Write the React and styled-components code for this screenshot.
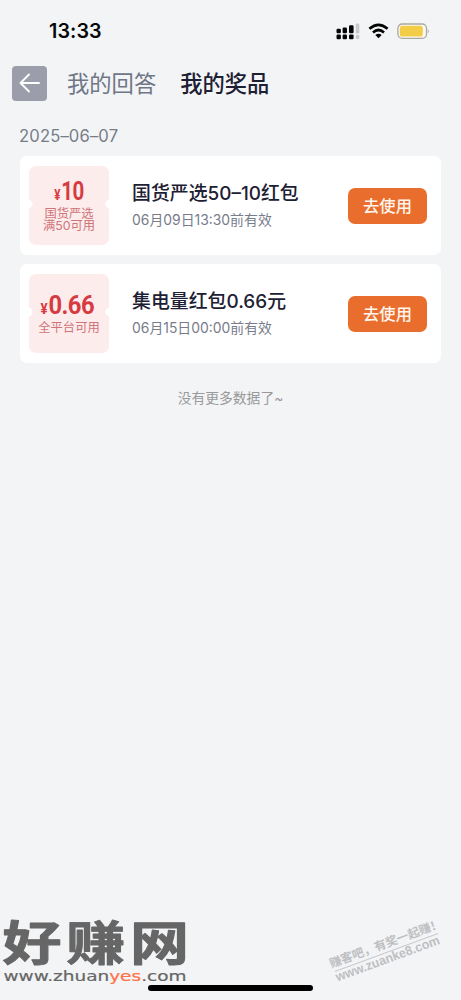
import React from "react";
import styled, { createGlobalStyle } from "styled-components";

const Global = createGlobalStyle`
  * { box-sizing: border-box; }
  body { margin: 0; background: #f3f4f6; }
`;

const Screen = styled.main`
  position: relative;
  width: 461px;
  height: 1000px;
  overflow: hidden;
  background: #f3f4f6;
  font-family: Inter, "Noto Sans CJK SC", sans-serif;
  color: #1d2033;
`;

const StatusBar = styled.div`
  display: flex;
  align-items: center;
  justify-content: space-between;
  height: 62px;
  padding: 0 31px 0 49px;
`;

const Clock = styled.span`
  font-size: 19.7px;
  font-weight: 600;
  line-height: 24px;
  letter-spacing: 0.1px;
  color: #08080a;
`;

const StatusIcons = styled.svg`
  display: block;
  width: 94px;
  height: 20px;
`;

const Header = styled.header`
  display: flex;
  align-items: center;
  height: 42px;
  padding-left: 12px;
`;

const BackButton = styled.button`
  display: grid;
  place-items: center;
  width: 35px;
  height: 35px;
  margin-right: 20px;
  padding: 0;
  border: 0;
  border-radius: 4px;
  background: #9b9eaa;
`;

const Tab = styled.span`
  margin-right: 24px;
  padding-top: 2px;
  font-size: 22.3px;
  line-height: 32px;
  font-weight: ${(p) => (p.$active ? 500 : 400)};
  color: ${(p) => (p.$active ? "#1d2033" : "#6f7686")};
`;

const DateLabel = styled.div`
  height: 52px;
  padding: 21px 0 0 19px;
  font-size: 16.6px;
  line-height: 22px;
  letter-spacing: 0.15px;
  color: #777c88;
`;

const List = styled.section`
  display: flex;
  flex-direction: column;
  gap: 9px;
  padding: 0 20px;
`;

const Card = styled.article`
  display: flex;
  align-items: center;
  height: 99px;
  padding: 0 14px 0 9px;
  border-radius: 7px;
  background: #fff;
`;

const Coupon = styled.div`
  display: flex;
  flex-direction: column;
  align-items: center;
  justify-content: center;
  width: 80px;
  height: 79px;
  border-radius: 7px;
  background:
    radial-gradient(circle at -1px 38px, #fff 4px, transparent 5px),
    radial-gradient(circle at 81px 38px, #fff 4px, transparent 5px),
    #fdecec;
`;

const Amount = styled.div`
  display: flex;
  align-items: baseline;
  margin-right: ${(p) => p.$shift}px;
  font-family: Roboto, sans-serif;
  font-size: 25px;
  font-weight: 700;
  line-height: 26px;
  letter-spacing: -0.6px;
  transform: scaleX(${(p) => p.$stretch});
  color: #d53b41;
`;

const Yen = styled.span`
  margin-right: 1px;
  font-size: 14px;
  letter-spacing: 0;
`;

const Scope = styled.div`
  font-size: 12.3px;
  line-height: 12.5px;
  text-align: center;
  white-space: pre-line;
  color: #cf7479;
`;

const Info = styled.div`
  flex: 1;
  margin-left: 23px;
  white-space: nowrap;
`;

const Title = styled.div`
  font-size: 18.9px;
  font-weight: 500;
  line-height: 27px;
  color: #1d2033;
`;

const Expiry = styled.div`
  margin-top: 2px;
  font-size: 13.9px;
  line-height: 22px;
  color: #777c8b;
`;

const UseButton = styled.button`
  width: 79px;
  height: 36px;
  padding: 0 0 1px;
  border: 0;
  border-radius: 7px;
  background: #e96e2e;
  color: #fff5ec;
  font-family: inherit;
  font-size: 16.3px;
  font-weight: 500;
`;

const EndNote = styled.p`
  margin: 24px 0 0;
  text-align: center;
  font-size: 13.8px;
  line-height: 22px;
  color: #999;
`;

const HomeIndicator = styled.div`
  position: absolute;
  left: 148px;
  top: 985px;
  width: 165px;
  height: 6px;
  border-radius: 3px;
  background: #000;
`;

const SiteMark = styled.svg`
  position: absolute;
  left: 0;
  top: 900px;
  width: 200px;
  height: 100px;
  overflow: visible;
`;

const SourceMark = styled.svg`
  position: absolute;
  left: 310px;
  top: 910px;
  width: 151px;
  height: 90px;
`;

const prizes = [
  { amount: "10", stretch: 0.82, shift: 0, scope: "国货严选\n满50可用", title: "国货严选50–10红包", expiry: "06月09日13:30前有效" },
  { amount: "0.66", stretch: 0.95, shift: 3, scope: "全平台可用", title: "集电量红包0.66元", expiry: "06月15日00:00前有效" },
];

export default function App() {
  return (
    <Screen>
      <Global />
      <StatusBar>
        <Clock>13:33</Clock>
        <StatusIcons viewBox="0 0 94 20">
          <g fill="#050505">
            <rect x="0.5" y="7.8" width="4.4" height="4.4" rx="1.2" />
            <rect x="6.6" y="6.5" width="4.4" height="5.7" rx="1.2" />
            <rect x="13" y="4.2" width="4.6" height="8" rx="1.2" />
            <rect x="0.5" y="13.6" width="4.4" height="4.6" rx="1.2" />
            <rect x="6.6" y="13.6" width="4.4" height="4.6" rx="1.2" />
            <rect x="13" y="13.6" width="4.6" height="4.6" rx="1.2" />
          </g>
          <rect x="19.8" y="2.5" width="3.5" height="10" rx="1.2" fill="#c9cacd" />
          <rect x="19.8" y="14" width="3.5" height="4" rx="1.2" fill="#c9cacd" />
          <g fill="none" stroke="#050505" strokeWidth="2.7">
            <path d="M33.4 7.8 Q42.5 -0.2 51.6 7.8" />
            <path d="M37 11.4 Q42.5 6.6 48 11.4" />
          </g>
          <path d="M39.3 14 Q42.5 11.4 45.7 14 L42.5 17.2 Z" fill="#050505" />
          <rect x="61.9" y="3" width="28.6" height="14.4" rx="4.4" fill="#fbfaf5" stroke="#aaa89f" strokeWidth="1.3" />
          <rect x="63.8" y="4.8" width="23" height="10.8" rx="2.6" fill="#f3cd48" />
          <path d="M91.8 8.2 Q93.8 10.2 91.8 12.2Z" fill="#aaa89f" />
        </StatusIcons>
      </StatusBar>
      <Header>
        <BackButton aria-label="返回">
          <svg width="21" height="20" viewBox="0 0 21 20" fill="none" stroke="#fff" strokeWidth="1.8" strokeLinecap="round" strokeLinejoin="round">
            <path d="M20 10H1.5M10 1.5L1.5 10L10 18.5" />
          </svg>
        </BackButton>
        <Tab>我的回答</Tab>
        <Tab $active>我的奖品</Tab>
      </Header>
      <DateLabel>2025–06–07</DateLabel>
      <List>
        {prizes.map((p) => (
          <Card key={p.title}>
            <Coupon>
              <Amount $stretch={p.stretch} $shift={p.shift}><Yen>¥</Yen>{p.amount}</Amount>
              <Scope>{p.scope}</Scope>
            </Coupon>
            <Info>
              <Title>{p.title}</Title>
              <Expiry>{p.expiry}</Expiry>
            </Info>
            <UseButton>去使用</UseButton>
          </Card>
        ))}
      </List>
      <EndNote>没有更多数据了~</EndNote>
      <HomeIndicator />
      <SiteMark viewBox="0 0 200 100">
        <g fill="#666" strokeLinejoin="round">
          <text transform="translate(2.5 63) scale(1.18 0.94)" y="-3" fontFamily="Noto Sans CJK SC" fontWeight="700" fontSize="50" letterSpacing="4" stroke="#666" strokeWidth="1">好赚网</text>
          <text transform="translate(3.5 81)" fontFamily="DejaVu Sans" fontSize="14" textLength="183" lengthAdjust="spacingAndGlyphs" stroke="#666" strokeWidth="0.2">
            www.zhuan<tspan fill="#ff7046" stroke="#ff7046">yes</tspan>.com
          </text>
        </g>
      </SiteMark>
      <SourceMark viewBox="0 0 151 90">
        <g transform="translate(22.5 58) rotate(-20.2)" fill="#bebfc2" fontWeight="700">
          <text x="-1" y="-0.5" fontFamily="Noto Sans CJK SC" fontSize="12" textLength="119">赚客吧，有奖一起赚！</text>
          <path d="M1 4H111" stroke="#c9cacd" strokeWidth="1" />
          <text x="0" y="14.5" fontFamily="Liberation Sans" fontSize="13" textLength="110" lengthAdjust="spacingAndGlyphs">www.zuanke8.com</text>
        </g>
      </SourceMark>
    </Screen>
  );
}
